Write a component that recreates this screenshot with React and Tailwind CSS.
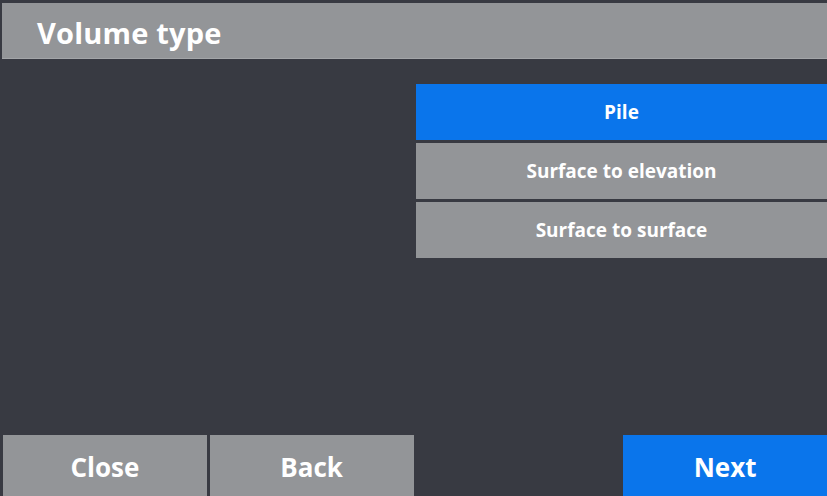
import React, { useState } from "react";

const OPTIONS = ["Pile", "Surface to elevation", "Surface to surface"];

function App() {
  const [selected, setSelected] = useState("Pile");

  return (
    <div
      className="w-[827px] h-[496px] bg-[#383a42] flex flex-col overflow-hidden text-white"
      style={{ fontFamily: '"Open Sans", "Noto Sans", sans-serif' }}
    >
      {/* Header */}
      <div className="mt-[3px] ml-[2px] h-[56px] bg-[#939598] flex items-center pl-[35px] pt-[4px] border-b border-[#a3a5a8]">
        <h1 className="text-[29px] font-bold tracking-[0.2px]">Volume type</h1>
      </div>

      {/* Body */}
      <div className="flex-1 flex pt-[25px]">
        <div className="w-[416px]" />
        <div className="flex-1 flex flex-col gap-[3px]">
          {OPTIONS.map((opt) => (
            <button
              key={opt}
              onClick={() => setSelected(opt)}
              className={`h-[56px] pt-[1px] text-[19px] font-bold ${
                selected === opt ? "bg-[#0a75eb]" : "bg-[#939598]"
              }`}
            >
              {opt}
            </button>
          ))}
        </div>
      </div>

      {/* Footer */}
      <div className="h-[61px] grid grid-cols-4 gap-[3px] pl-[3px]">
        <button className="bg-[#939598] pt-[3px] text-[26px] font-bold">Close</button>
        <button className="bg-[#939598] pt-[3px] text-[26px] font-bold">Back</button>
        <div />
        <button className="bg-[#0a75eb] pt-[3px] text-[26px] font-bold">Next</button>
      </div>
    </div>
  );
}

export default App;
